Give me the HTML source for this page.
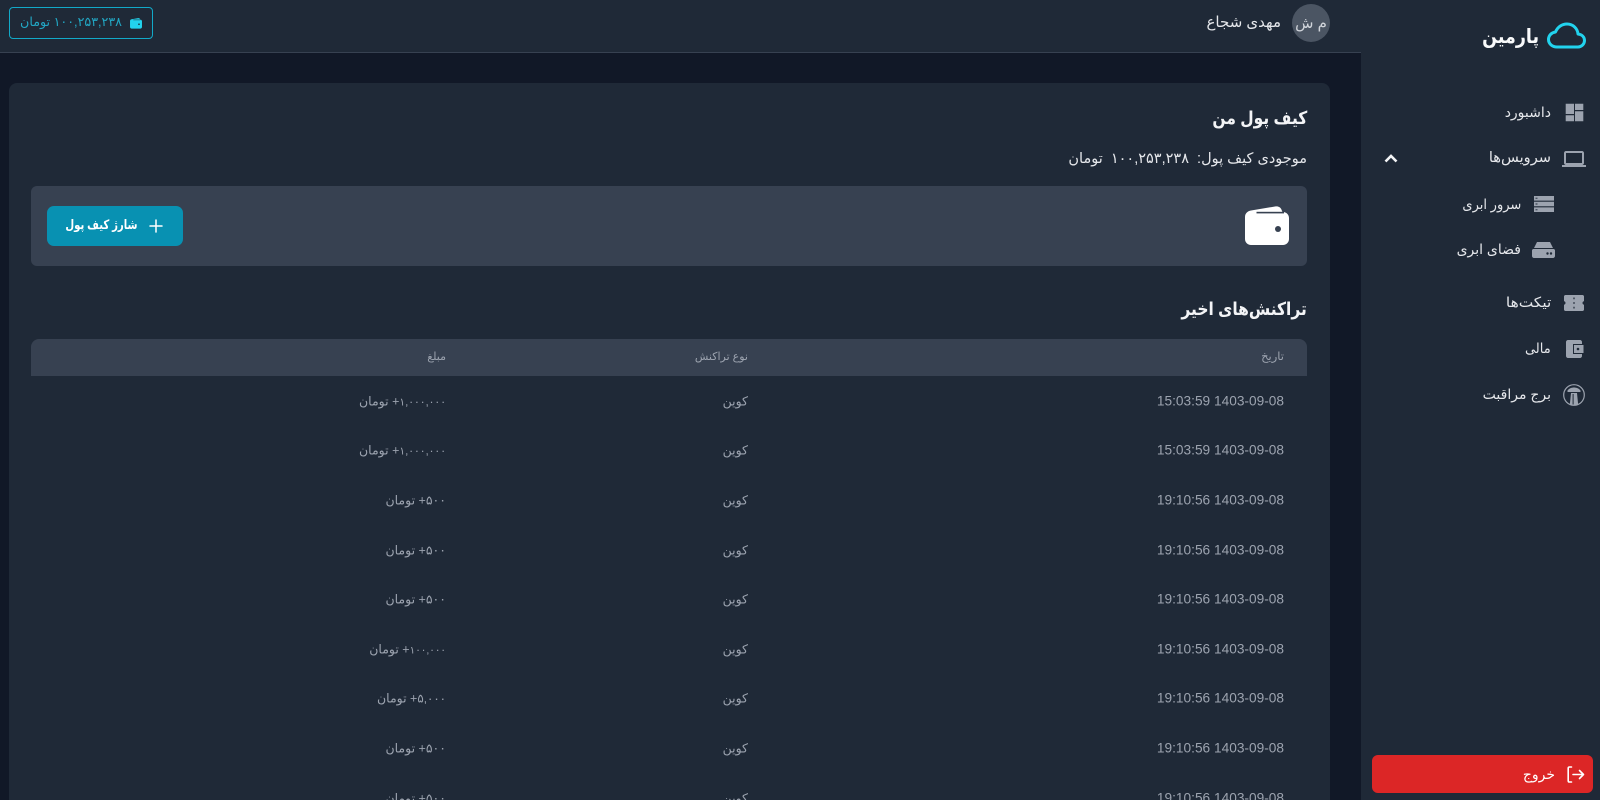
<!DOCTYPE html>
<html lang="fa" dir="rtl">
<head>
<meta charset="utf-8">
<title>پارمین</title>
<style>
*{box-sizing:border-box;margin:0;padding:0}
html,body{width:1600px;height:800px;overflow:hidden;background:#111827}
body{font-family:"Liberation Sans","DejaVu Sans",sans-serif;position:relative;color:#e5e7eb}
.a{position:absolute}
.t{position:absolute;white-space:nowrap;direction:rtl;line-height:20px;height:20px;transform-origin:100% 50%}
svg{position:absolute;display:block}
.side{position:absolute;left:1361px;top:0;width:239px;height:800px;background:#1f2937}
.head{position:absolute;left:0;top:0;width:1361px;height:53px;background:#1f2937;border-bottom:1px solid #374151}
.card{position:absolute;left:9px;top:83px;width:1321px;height:717px;background:#1f2937;border-radius:8px 8px 0 0}
.m{font-size:14px;color:#e5e7eb}
.row{position:absolute;left:31px;width:1276px;height:49.6px;color:#9ca3af;font-size:12.5px;overflow:hidden}
.row span{position:absolute;top:24.8px;transform:translateY(-50%);white-space:nowrap;direction:rtl}
.row i{font-style:normal}
.d{right:23px;font-size:13.7px}
.k{right:559px}
.v{right:861px}
</style>
</head>
<body>
<div class="head"></div>
<div class="side"></div>
<div class="card"></div>

<!-- header -->
<div class="a" style="left:9px;top:7px;width:144px;height:32px;border:1.300px solid #12a9c8;border-radius:4px"></div>
<svg style="left:130px;top:18px" width="12" height="10.600" viewBox="0 0 44 39"><path fill="#22d3ee" d="M0 11C0 7 3 5 6 4.500L30 .5C33 0 36 1 37 5L37.500 6H38C41.300 6 44 8.700 44 12V33C44 36.300 41.300 39 38 39H6C2.700 39 0 36.300 0 33z"/><rect x="12" y="6" width="26" height="2" fill="#1f2937"/><circle cx="33" cy="23" r="3" fill="#1f2937"/></svg>
<div class="t" style="right:1478px;top:12px;font-size:12.700px;color:#22a7c4">۱۰۰,۲۵۳,۲۳۸ تومان</div>
<div class="a" style="left:1292px;top:4px;width:38px;height:38px;border-radius:50%;background:#4b5563"></div>
<div class="t" style="right:270px;top:14px;font-size:15px;color:#d1d5db;width:38px;text-align:center">م ش</div>
<div class="t m" style="right:319px;top:13px;font-size:15px">مهدی شجاع</div>

<!-- sidebar -->
<svg style="left:1547px;top:22px" width="39" height="27" viewBox="0 0 39 27"><path fill="none" stroke="#22d3ee" stroke-width="3" stroke-linejoin="round" d="M10 25C5 25 1.500 21.500 1.500 17.500C1.500 13.500 4.500 10.500 8.500 10C10.500 5 15 2 20 2C26 2 30.500 6.500 31 12C35 12.500 37.500 15 37.500 18.500C37.500 22 34.500 25 31 25z"/></svg>
<div class="t" style="right:61px;top:25px;font-size:20px;font-weight:700;color:#f9fafb;line-height:24px;height:24px;transform:scaleX(.875)">پارمین</div>

<svg style="left:1565px;top:103px" width="19" height="19" viewBox="0 0 19 19"><path fill="#9ca3af" d="M.700.700H9V11H.700zM.700 12.300H9V18.300H.700zM10 .700H18.300V7H10zM10 8.300H18.300V18.300H10z"/></svg>
<div class="t m" style="right:49px;top:102px">داشبورد</div>

<svg style="left:1562px;top:147px" width="24" height="24" viewBox="0 0 24 24"><path fill="#9ca3af" d="M20 18c1.100 0 1.990-.9 1.990-2L22 6c0-1.100-.9-2-2-2H4c-1.100 0-2 .9-2 2v10c0 1.100.9 2 2 2H0v2h24v-2h-4zM4 6h16v10H4V6z"/></svg>
<div class="t m" style="right:49px;top:148px;font-size:14.600px">سرویس‌ها</div>
<svg style="left:1384px;top:153px" width="14" height="11" viewBox="0 0 14 11"><path fill="none" stroke="#f3f4f6" stroke-width="2.600" d="M1.500 8.500 7 3l5.500 5.500"/></svg>

<svg style="left:1534px;top:196px" width="20" height="16" viewBox="0 0 20 16"><path fill="#9ca3af" d="M0 0h20v4.600H0zM0 5.700h20v4.600H0zM0 11.400h20V16H0z"/><path fill="#4b5563" d="M1.500 1.600h2v1.400h-2zM1.500 7.300h2v1.400h-2zM1.500 13h2v1.400h-2z"/></svg>
<div class="t m" style="right:79px;top:194px;transform:scaleX(.93)">سرور ابری</div>

<svg style="left:1532px;top:242px" width="23" height="16" viewBox="0 0 23 16"><path fill="#9ca3af" d="M5 0h13l3 6H2zM1.500 7h20c.8 0 1.500.7 1.500 1.500V14c0 1.100-.9 2-2 2H2c-1.100 0-2-.9-2-2V8.500C0 7.700.7 7 1.500 7z"/><circle cx="15.500" cy="11.500" r="1.200" fill="#1f2937"/><circle cx="19" cy="11.500" r="1.200" fill="#1f2937"/></svg>
<div class="t m" style="right:79px;top:239px">فضای ابری</div>

<svg style="left:1564px;top:295px" width="20" height="16" viewBox="0 0 20 16"><path fill="#9ca3af" d="M1.500 0h17c.8 0 1.500.7 1.500 1.500V6.300c-.9 0-1.500.8-1.500 1.700s.6 1.700 1.500 1.700v4.800c0 .8-.7 1.500-1.500 1.500h-17C.7 16 0 15.300 0 14.500V9.700c.9 0 1.500-.8 1.500-1.700S.900 6.300 0 6.300V1.500C0 .7.700 0 1.500 0z"/><path fill="#1f2937" d="M9.400 2.500h1.200v1.800H9.400zM9.400 7.100h1.200v1.800H9.400zM9.400 11.700h1.200v1.800H9.400z"/></svg>
<div class="t m" style="right:49px;top:292px;transform:scaleX(1.1)">تیکت‌ها</div>

<svg style="left:1566px;top:340px" width="18" height="18" viewBox="0 0 18 18"><path fill="#9ca3af" d="M2 0h12c1.100 0 2 .9 2 2v2h2v10h-2v2c0 1.100-.9 2-2 2H2c-1.100 0-2-.9-2-2V2C0 .9.900 0 2 0z"/><path fill="none" stroke="#1f2937" stroke-width="1" d="M7.500 4.500H18V13.500H7.500z"/><circle cx="12" cy="9" r="1.300" fill="#1f2937"/></svg>
<div class="t m" style="right:49px;top:338px;transform:scaleX(.93)">مالی</div>

<svg style="left:1563px;top:384px" width="22" height="22" viewBox="0 0 22 22"><circle cx="11" cy="11" r="10.300" fill="none" stroke="#9ca3af" stroke-width="1.200"/><path fill="#9ca3af" d="M4.500 6.500C6 4.500 8.500 3.500 11 3.500s5 1 6.500 3v1.500h-13zM8 9h6l1.200 12H6.800z"/><path fill="#1f2937" d="M9.600 10h1v10.500h-1z"/></svg>
<div class="t m" style="right:49px;top:384px">برج مراقبت</div>

<div class="a" style="left:1372px;top:755px;width:221px;height:38px;background:#dc2626;border-radius:6px"></div>
<svg style="left:1567px;top:766px" width="18" height="17" viewBox="0 0 18 17"><path fill="none" stroke="#fff" stroke-width="1.600" stroke-linecap="round" stroke-linejoin="round" d="M4.500 1H2.500C1.700 1 1.200 1.500 1.200 2.300v12.400c0 .8.500 1.300 1.300 1.300h2M6 8.500h10.500M12.500 4.500l4 4-4 4"/></svg>
<div class="t" style="right:45px;top:764px;font-size:14px;color:#fff">خروج</div>

<!-- content -->
<div class="t" style="right:293px;top:106px;font-size:18px;font-weight:700;color:#f3f4f6;line-height:24px;height:24px;transform:scaleX(.86)">کیف پول من</div>
<div class="t" style="right:293px;top:149px;font-size:14.500px;color:#e5e7eb">موجودی کیف پول:&nbsp; ۱۰۰,۲۵۳,۲۳۸&nbsp; تومان</div>

<div class="a" style="left:31px;top:186px;width:1276px;height:80px;background:#374151;border-radius:6px"></div>
<svg style="left:1245px;top:206px" width="44" height="39" viewBox="0 0 44 39"><path fill="#fff" d="M0 11C0 7 3 5 6 4.500L30 .5C33 0 36 1 37 5L37.500 6H38C41.300 6 44 8.700 44 12V33C44 36.300 41.300 39 38 39H6C2.700 39 0 36.300 0 33z"/><rect x="11.500" y="5.800" width="27.500" height="1.600" fill="#374151"/><circle cx="33" cy="23" r="3" fill="#374151"/></svg>

<div class="a" style="left:47px;top:206px;width:136px;height:40px;background:#0891b2;border-radius:7px"></div>
<svg style="left:149px;top:219px" width="14" height="14" viewBox="0 0 14 14"><path fill="none" stroke="#fff" stroke-width="1.500" stroke-linecap="round" d="M7 1v12M1 7h12"/></svg>
<div class="t" style="right:1462px;top:215px;font-size:13px;font-weight:700;color:#fff;transform:scaleX(.78)">شارژ کیف پول</div>

<div class="t" style="right:293px;top:297px;font-size:18px;font-weight:700;color:#f3f4f6;line-height:24px;height:24px;transform:scaleX(.86)">تراکنش‌های اخیر</div>

<div class="a" style="left:31px;top:339px;width:1276px;height:37px;background:#374151;border-radius:8px 8px 0 0"></div>
<div class="t" style="right:316px;top:347px;font-size:11.500px;color:#9ca3af">تاریخ</div>
<div class="t" style="right:852px;top:347px;font-size:11px;color:#9ca3af">نوع تراکنش</div>
<div class="t" style="right:1154px;top:347px;font-size:11px;color:#9ca3af">مبلغ</div>

<div class="row" style="top:376px"><span class="d">1403-09-08 15:03:59</span><span class="k">کوین</span><span class="v"><i style="font-size:10.800px">۱,۰۰۰,۰۰۰</i>+ تومان</span></div>
<div class="row" style="top:425.600px"><span class="d">1403-09-08 15:03:59</span><span class="k">کوین</span><span class="v"><i style="font-size:10.800px">۱,۰۰۰,۰۰۰</i>+ تومان</span></div>
<div class="row" style="top:475.200px"><span class="d">1403-09-08 19:10:56</span><span class="k">کوین</span><span class="v">۵۰۰+ تومان</span></div>
<div class="row" style="top:524.800px"><span class="d">1403-09-08 19:10:56</span><span class="k">کوین</span><span class="v">۵۰۰+ تومان</span></div>
<div class="row" style="top:574.400px"><span class="d">1403-09-08 19:10:56</span><span class="k">کوین</span><span class="v">۵۰۰+ تومان</span></div>
<div class="row" style="top:624px"><span class="d">1403-09-08 19:10:56</span><span class="k">کوین</span><span class="v"><i style="font-size:10.400px">۱۰۰,۰۰۰</i>+ تومان</span></div>
<div class="row" style="top:673.600px"><span class="d">1403-09-08 19:10:56</span><span class="k">کوین</span><span class="v"><i style="font-size:11.800px">۵,۰۰۰</i>+ تومان</span></div>
<div class="row" style="top:723.200px"><span class="d">1403-09-08 19:10:56</span><span class="k">کوین</span><span class="v">۵۰۰+ تومان</span></div>
<div class="row" style="top:772.800px;height:27.200px"><span class="d">1403-09-08 19:10:56</span><span class="k">کوین</span><span class="v">۵۰۰+ تومان</span></div>
</body>
</html>
